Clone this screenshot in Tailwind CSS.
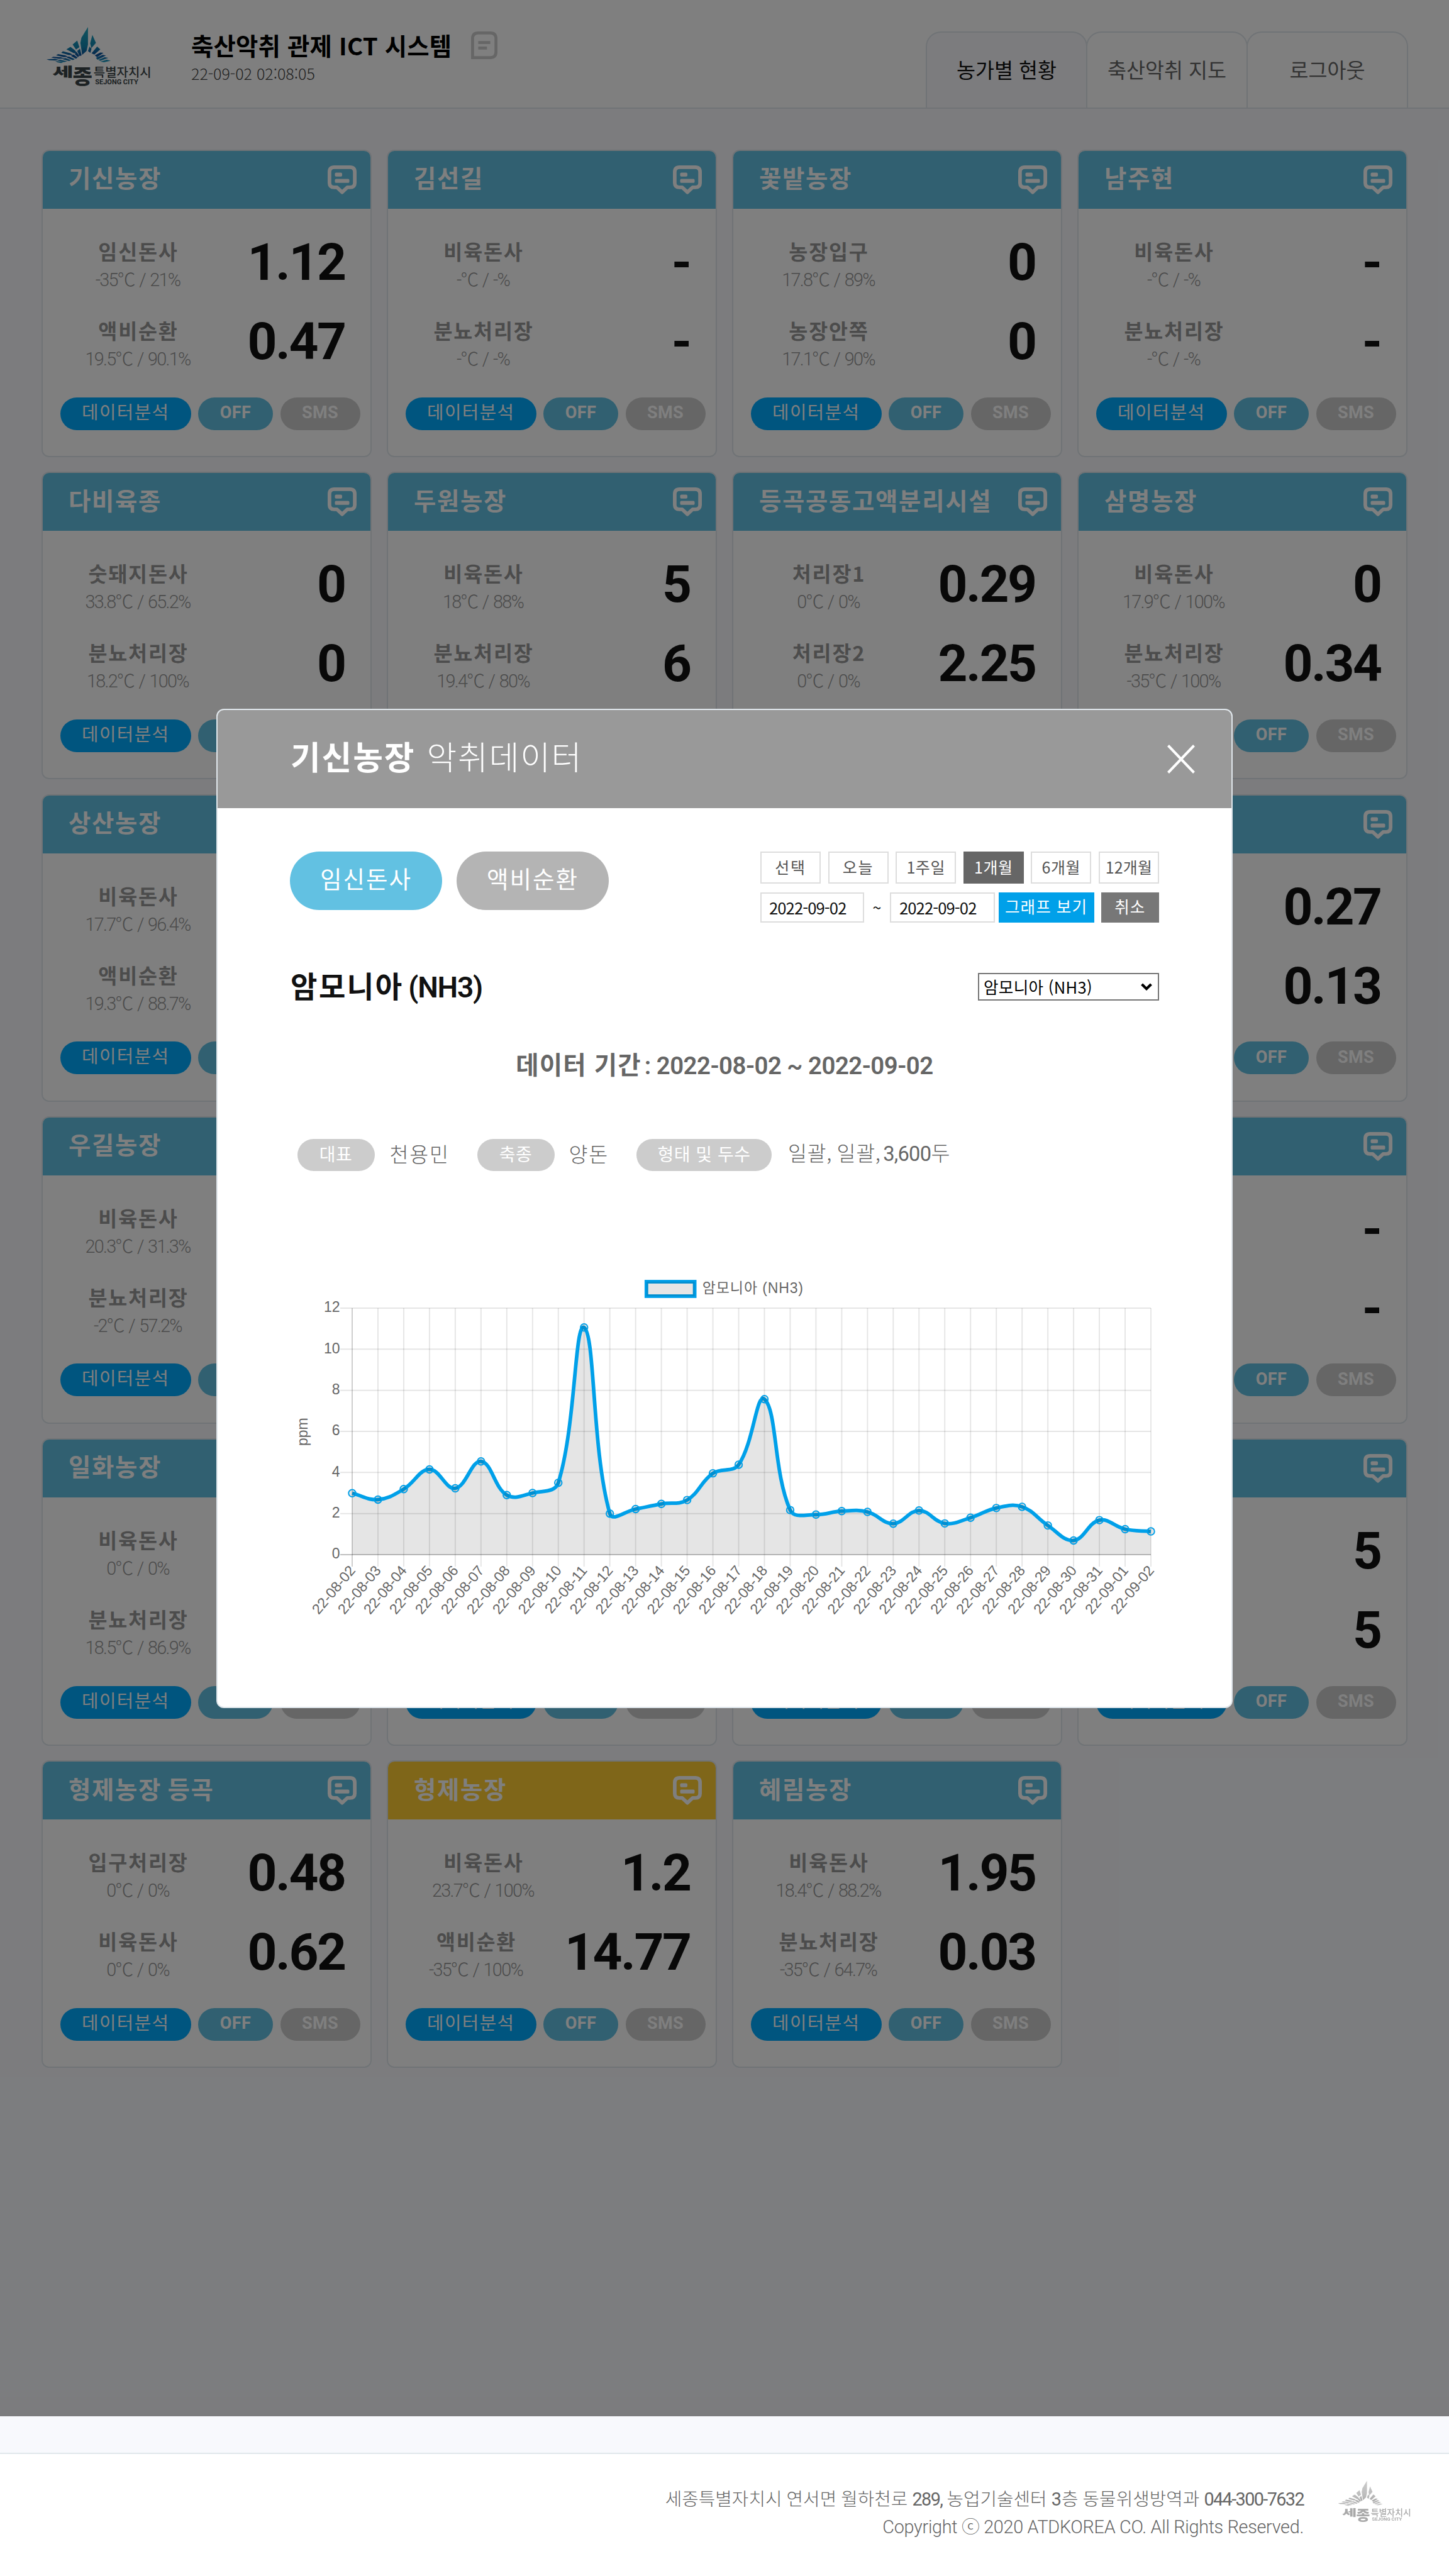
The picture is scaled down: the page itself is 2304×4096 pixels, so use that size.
<!DOCTYPE html>
<html lang="ko">
<head>
<meta charset="utf-8">
<title>축산악취 관제 ICT 시스템</title>
<script src="https://cdn.jsdelivr.net/npm/@tailwindcss/browser@4"></script>
</head>
<body class="bg-[#f8f9fd] font-['Noto_Sans_CJK_KR',sans-serif] text-black">

<svg class="absolute h-0 w-0">
  <defs>
    <linearGradient id="wing" gradientUnits="userSpaceOnUse" x1="220" y1="60" x2="230" y2="222">
      <stop offset="0" stop-color="#1fa3bd"/><stop offset="0.5" stop-color="#1386b0"/><stop offset="0.78" stop-color="#0b4f9c"/><stop offset="1" stop-color="#1a9ac0"/>
    </linearGradient>
    <symbol id="emblem" viewBox="45 40 530 298">
      <g fill="url(#wing)">
        <path d="M256 42L223 96L218 122L227 182L249 162L256 130Z"/>
        <path d="M278 82L296 122L273 148L267 124Z"/>
        <path d="M264 140L274 151L268 172L256 163Z"/>
        <path d="M202 110L213 143L196 155L179 130Z"/>
        <path d="M216 150L224 184L214 188L202 162Z"/>
        <path d="M168 142L190 158L200 172L186 174L148 154Z"/>
        <path d="M198 166L212 186L206 194L190 178Z"/>
        <path d="M130 164L166 173L182 183L160 183L122 172Z"/>
        <path d="M184 180L204 195L196 202L170 187Z"/>
        <path d="M106 178L142 184L158 191L134 193L96 184Z"/>
        <path d="M160 190L190 203L180 208L148 195Z"/>
        <path d="M82 191L120 194L138 200L110 202L72 195Z"/>
        <path d="M142 198L172 209L160 213L128 203Z"/>
        <path d="M48 204L90 202L112 207L92 210L62 209Z"/>
        <path d="M116 206L152 214L136 218L104 211Z"/>
        <path d="M92 213L134 218L122 223L102 219Z"/>
        <path d="M302 140L318 154L288 180L274 174Z"/>
        <path d="M318 170L334 172L302 194L290 184Z"/>
        <path d="M346 185L304 206L296 197L330 182Z"/>
        <path d="M358 197L318 212L308 207L340 194Z"/>
        <path d="M370 211L336 219L318 216L350 206Z"/>
      </g>
      <g fill="#3a4548" font-family="'Noto Sans CJK KR',sans-serif">
        <text x="77" y="291" font-size="64" font-weight="900" textLength="106" lengthAdjust="spacingAndGlyphs">세</text>
        <text x="179" y="325" font-size="100" font-weight="900" textLength="99" lengthAdjust="spacingAndGlyphs">종</text>
        <text x="284" y="291" font-size="62" font-weight="500" textLength="290" lengthAdjust="spacingAndGlyphs">특별자치시</text>
        <text x="292" y="330" font-size="32" font-weight="700" font-family="Roboto,sans-serif" textLength="216" lengthAdjust="spacingAndGlyphs">SEJONG CITY</text>
      </g>
    </symbol>
    <symbol id="bubble" viewBox="0 0 48 48">
      <path d="M11 3H37Q45 3 45 11V29Q45 36.5 37 36.5H32.5L24 44.5L15.5 36.5H11Q3 36.5 3 29V11Q3 3 11 3Z" fill="none" stroke="currentColor" stroke-width="6" stroke-linejoin="round"/>
      <rect x="12" y="12" width="12" height="6.5" rx="2" fill="currentColor"/>
      <rect x="12" y="22.5" width="24" height="6.5" rx="2" fill="currentColor"/>
    </symbol>
  </defs>
</svg>

<div class="relative flex h-[4096px] w-[2304px] flex-col overflow-hidden">

  <header class="flex h-[173px] justify-between border-b-2 border-[#e0e7ec] bg-white pl-[73px] pr-[65px]">
    <div class="flex">
      <svg class="mt-[42px] h-[95px] w-[168px]"><use href="#emblem"/></svg>
      <div class="ml-[63px] mt-[49px] w-[412px]">
        <h1 class="whitespace-nowrap text-[38.4px] font-bold leading-[44px] tracking-[0.2px]">축산악취 관제 ICT 시스템</h1>
        <p class="mt-[9.5px] whitespace-nowrap text-[25px] font-light leading-[26px] text-[#444]">22-09-02 02:08:05</p>
      </div>
      <svg class="ml-[33px] mt-[50px] h-[44px] w-[42px] text-[#ccc]" viewBox="0 0 44 46" fill="none" stroke="currentColor">
        <path d="M2.5 43.5V12Q2.5 2.5 12 2.5H32Q41.500 2.500 41.500 12V34Q41.500 43.500 32 43.500Z" stroke-width="5"/>
        <path d="M12 18.500H32M12 27.500H26.500" stroke-width="5"/>
      </svg>
    </div>
    <nav class="flex items-end text-[32.64px] leading-none text-[#666]">
      <a class="flex h-[121px] w-[257px] items-center justify-center rounded-t-[24px] border-2 border-b-0 border-[#e0e7ec] bg-[#f8f9fd] pb-[2px] text-[#111]">농가별 현황</a>
      <a class="-ml-[2px] flex h-[121px] w-[257px] items-center justify-center rounded-t-[24px] border-2 border-b-0 border-[#e0e7ec] pb-[2px]">축산악취 지도</a>
      <a class="-ml-[2px] flex h-[121px] w-[257px] items-center justify-center rounded-t-[24px] border-2 border-b-0 border-[#e0e7ec] pb-[2px]">로그아웃</a>
    </nav>
  </header>

  <main class="h-[3727px] px-[66px] pt-[65px]">
    <div id="farms" class="grid auto-rows-[489px] grid-cols-4 gap-x-[24px] gap-y-[23.3px]"></div>
  </main>

  <footer class="flex h-[196px] justify-end border-t-2 border-[#e0e7ec] bg-white pr-[60px]">
    <div class="whitespace-nowrap pt-[50px] text-right font-['Roboto','Noto_Sans_CJK_KR',sans-serif] text-[28.8px] font-light leading-[44px] tracking-[-0.3px] text-[#666]">
      <p class="tracking-[0.05px]">세종특별자치시 연서면 월하천로 <span class="font-normal tracking-[-1.6px]">289,</span> 농업기술센터 <span class="font-normal">3</span>층 동물위생방역과 <span class="font-normal tracking-[-1.6px]">044-300-7632</span></p>
      <p>Copyright ⓒ 2020 ATDKOREA CO. All Rights Reserved.</p>
    </div>
    <svg class="ml-[54px] mt-[42px] h-[66px] w-[117px] opacity-45 grayscale"><use href="#emblem"/></svg>
  </footer>

  <div class="absolute inset-x-0 top-0 h-[3842px] bg-black/50 pl-[344px] pt-[1127px]">
    <section class="flex h-[1589px] w-[1616px] flex-col overflow-hidden rounded-[12px] border-2 border-[#e0e7ec] bg-white">
      <div class="flex h-[156px] items-center justify-between bg-[#999] pl-[116px] pr-[58px] text-white">
        <h2 class="flex gap-[18px] pb-[10px] text-[51.84px] leading-none tracking-[1.92px]"><b class="font-bold">기신농장</b><span class="font-light">악취데이터</span></h2>
        <svg class="h-[46px] w-[44px]" viewBox="0 0 44 46" stroke="currentColor" stroke-width="4"><path d="M1.500 1.500L42.500 44.500M42.500 1.500L1.500 44.500"/></svg>
      </div>

      <div class="px-[115px] pt-[69px]">
        <div class="flex justify-between">
          <div class="flex gap-[23px] text-[37.5px] leading-none tracking-[2px] text-white">
            <button class="flex h-[93px] w-[242px] items-center justify-center rounded-full bg-[#62c1e2] pb-[9px]">임신돈사</button>
            <button class="flex h-[93px] w-[242px] items-center justify-center rounded-full bg-[#b4b4b4] pb-[9px]">액비순환</button>
          </div>
          <div class="w-[634px] text-[24.96px] leading-none">
            <div class="flex justify-between tracking-[1.9px] text-[#555]">
              <button class="flex h-[51px] w-[96px] items-center justify-center whitespace-nowrap border-2 border-[#ddd] pb-[2px]">선택</button>
              <button class="flex h-[51px] w-[96px] items-center justify-center whitespace-nowrap border-2 border-[#ddd] pb-[2px]">오늘</button>
              <button class="flex h-[51px] w-[96px] items-center justify-center whitespace-nowrap border-2 border-[#ddd] pb-[2px] tracking-[0.6px]">1주일</button>
              <button class="flex h-[51px] w-[96px] items-center justify-center whitespace-nowrap border-2 border-[#666] bg-[#666] pb-[2px] tracking-[0.6px] text-white">1개월</button>
              <button class="flex h-[51px] w-[96px] items-center justify-center whitespace-nowrap border-2 border-[#ddd] pb-[2px] tracking-[0.6px]">6개월</button>
              <button class="flex h-[51px] w-[96px] items-center justify-center whitespace-nowrap border-2 border-[#ddd] pb-[2px] tracking-[0.2px]">12개월</button>
            </div>
            <div class="mt-[14px] flex h-[47.500px]">
              <div class="flex w-[165px] items-center border-2 border-[#ddd] pl-[12px] text-[25.6px] tracking-[-0.9px] text-[#111]">2022-09-02</div>
              <div class="flex w-[41px] items-center justify-center text-[#111]">~</div>
              <div class="flex w-[167px] items-center border-2 border-[#ddd] pl-[13px] text-[25.6px] tracking-[-0.9px] text-[#111]">2022-09-02</div>
              <button class="ml-[5.500px] flex w-[152px] items-center justify-center whitespace-nowrap bg-[#00a0e9] pb-[4px] text-[25.6px] tracking-[1px] text-white">그래프 보기</button>
              <button class="ml-[11px] flex w-[92.500px] items-center justify-center bg-[#777] pb-[4px] text-[25.6px] tracking-[1px] text-white">취소</button>
            </div>
          </div>
        </div>

        <div class="mt-[80px] flex h-[44px] items-center justify-between">
          <h3 class="whitespace-nowrap pl-[1px] text-[46.08px] font-bold leading-none tracking-[2.500px] text-[#111]"><span class="mr-[-2.500px]">암모니아</span><span class="font-['Roboto'] font-semibold tracking-[-1.200px]"> (NH3)</span></h3>
          <div class="flex h-[44px] w-[288px] items-center justify-between border-2 border-[#767676] pl-[7px] pr-[9px] text-[25.6px] leading-none tracking-[0.3px]">
            <span class="whitespace-nowrap">암모니아 (NH3)</span>
            <svg class="h-[12px] w-[18px]" viewBox="0 0 18 12" fill="none" stroke="currentColor" stroke-width="4.200"><path d="M1.600 2L9 9.200L16.400 2"/></svg>
          </div>
        </div>

        <p class="mt-[80px] h-[40px] whitespace-nowrap text-center text-[39.500px] font-bold leading-[40px] tracking-[1.100px] text-[#666]"><span class="mr-[-4px]">데이터 기간</span><span class="font-['Roboto'] text-[38.4px] font-semibold tracking-[-0.5px]"> : 2022-08-02 ~ 2022-09-02</span></p>

        <div class="mt-[100px] flex h-[51px] items-center pl-[11.500px] text-[32.64px] font-light leading-none tracking-[1.700px] text-[#666]">
          <span class="flex h-[51px] w-[123px] items-center justify-center rounded-full bg-[#ccc] pb-[5px] text-[28px] font-normal tracking-[0.400px] text-white">대표</span>
          <span class="ml-[24px] w-[139px] whitespace-nowrap pb-[4px]">천용민</span>
          <span class="flex h-[51px] w-[123px] items-center justify-center rounded-full bg-[#ccc] pb-[5px] text-[28px] font-normal tracking-[0.400px] text-white">축종</span>
          <span class="ml-[23px] w-[107.500px] whitespace-nowrap pb-[4px]">양돈</span>
          <span class="flex h-[51px] w-[215px] items-center justify-center whitespace-nowrap rounded-full bg-[#ccc] pb-[5px] text-[28px] font-normal tracking-[0.500px] text-white">형태 및 두수</span>
          <span class="ml-[26px] whitespace-nowrap pb-[4px] tracking-[0.600px]">일괄<span class="tracking-[-0.500px]">, </span>일괄<span class="tracking-[-2.500px]">, </span><span class="font-['Roboto'] font-normal tracking-[-0.700px]">3,600</span>두</span>
        </div>
      </div>

      <svg id="chart" class="h-[850px] w-[1612px] shrink-0" viewBox="346 1862 1612 850" font-family="'Liberation Sans','Noto Sans CJK KR',sans-serif" font-size="23.04" fill="#666"></svg>
    </section>
  </div>
</div>

<script>
const farms = [
  ['기신농장', [['임신돈사','-35℃ / 21%','1.12'],['액비순환','19.5℃ / 90.1%','0.47']]],
  ['김선길', [['비육돈사','-℃ / -%','-'],['분뇨처리장','-℃ / -%','-']]],
  ['꽃밭농장', [['농장입구','17.8℃ / 89%','0'],['농장안쪽','17.1℃ / 90%','0']]],
  ['남주현', [['비육돈사','-℃ / -%','-'],['분뇨처리장','-℃ / -%','-']]],
  ['다비육종', [['숫돼지돈사','33.8℃ / 65.2%','0'],['분뇨처리장','18.2℃ / 100%','0']]],
  ['두원농장', [['비육돈사','18℃ / 88%','5'],['분뇨처리장','19.4℃ / 80%','6']]],
  ['등곡공동고액분리시설', [['처리장1','0℃ / 0%','0.29'],['처리장2','0℃ / 0%','2.25']]],
  ['삼명농장', [['비육돈사','17.9℃ / 100%','0'],['분뇨처리장','-35℃ / 100%','0.34']]],
  ['상산농장', [['비육돈사','17.7℃ / 96.4%',''],['액비순환','19.3℃ / 88.7%','']]],
  null, null,
  ['', [['','','0.27'],['','','0.13']]],
  ['우길농장', [['비육돈사','20.3℃ / 31.3%',''],['분뇨처리장','-2℃ / 57.2%','']]],
  null, null,
  ['', [['','','-'],['','','-']]],
  ['일화농장', [['비육돈사','0℃ / 0%',''],['분뇨처리장','18.5℃ / 86.9%','']]],
  ['', []], ['', []],
  ['', [['','','5'],['','','5']]],
  ['형제농장 등곡', [['입구처리장','0℃ / 0%','0.48'],['비육돈사','0℃ / 0%','0.62']]],
  ['형제농장', [['비육돈사','23.7℃ / 100%','1.2'],['액비순환','-35℃ / 100%','14.77']], 'bg-[#ffcc33]'],
  ['혜림농장', [['비육돈사','18.4℃ / 88.2%','1.95'],['분뇨처리장','-35℃ / 64.7%','0.03']]],
];
const row = ([label, env, value]) => `
  <div class="flex h-[80px] justify-between">
    <div class="w-[304px] whitespace-nowrap text-center text-[#999]">
      <div class="h-[40px] text-[32.64px] font-bold leading-[40px] tracking-[1.8px]">${label}</div>
      <div class="mt-[11px] pr-[2px] font-['Roboto','Noto_Sans_CJK_KR',sans-serif] text-[28.8px] font-light leading-[30px] tracking-[-1.7px] [word-spacing:2px]">${env}</div>
    </div>
    <div class="font-['Roboto'] text-[82px] font-bold leading-[77px] tracking-[-2.5px] text-[#111]">${value}</div>
  </div>`;
const card = ([name, rows, tone = 'bg-[#62c1e2]']) => `
  <article class="flex flex-col overflow-hidden rounded-[12px] border-2 border-[#e0e7ec] bg-white">
    <div class="flex h-[92px] shrink-0 items-center justify-between pl-[41px] pr-[22px] text-white ${tone}">
      <h2 class="whitespace-nowrap pb-[9px] text-[38.4px] font-bold leading-none tracking-[1.7px] [word-spacing:-3px]">${name}</h2>
      <svg class="h-[46px] w-[46px] shrink-0"><use href="#bubble"/></svg>
    </div>
    <div class="mt-[47px] flex h-[206px] flex-col gap-[46px] pr-[40.5px]">${rows.map(row).join('')}</div>
    <div class="mt-[46.5px] flex gap-[11.5px] pl-[28px] font-['Roboto'] text-[27px] font-bold leading-none tracking-[0.4px] text-white">
      <button class="flex h-[52px] w-[207.5px] items-center justify-center rounded-full bg-[#00aaff] pb-[7px] font-['Noto_Sans_CJK_KR'] text-[28.8px] font-normal tracking-[1.4px]">데이터분석</button>
      <button class="flex h-[52px] w-[119px] items-center justify-center rounded-full bg-[#62c1e2] pb-[2px]">OFF</button>
      <button class="flex h-[52px] w-[127px] items-center justify-center rounded-full bg-[#ccc] pb-[2px]">SMS</button>
    </div>
  </article>`;
document.getElementById('farms').innerHTML = farms.map(f => f ? card(f) : '<article class="rounded-[12px] bg-white"></article>').join('');

const values = [2.99,2.68,3.19,4.15,3.23,4.54,2.90,3.0,3.50,11.06,2.0,2.22,2.47,2.66,3.96,4.38,7.57,2.17,1.95,2.12,2.08,1.51,2.15,1.52,1.80,2.27,2.33,1.42,0.69,1.68,1.24,1.13];
const X0 = 560, X1 = 1830, Y0 = 2472, Y1 = 2080;
const px = i => X0 + (X1 - X0) * i / 31;
const py = v => Y0 - (Y0 - Y1) * v / 12;
const pts = values.map((v, i) => [px(i), py(v)]);
const clampY = y => Math.min(Y0, Math.max(Y1, y));
// Bezier control points on either side of each sample, tension 0.4
const ctl = pts.map((p, i) => {
  const a = pts[i - 1] || p, b = pts[i + 1] || p;
  const d01 = Math.hypot(p[0] - a[0], p[1] - a[1]), d12 = Math.hypot(b[0] - p[0], b[1] - p[1]);
  const fa = 0.4 * d01 / (d01 + d12), fb = 0.4 * d12 / (d01 + d12);
  return [[p[0] - fa * (b[0] - a[0]), clampY(p[1] - fa * (b[1] - a[1]))],
          [p[0] + fb * (b[0] - a[0]), clampY(p[1] + fb * (b[1] - a[1]))]];
});
let d = `M${pts[0]}`;
for (let i = 1; i < pts.length; i++) d += `C${ctl[i - 1][1]} ${ctl[i][0]} ${pts[i]}`;
let s = '';
for (let v = 0; v <= 12; v += 2) {
  s += `<path d="M${X0 - 19} ${py(v)}H${X1}" stroke="#000" stroke-opacity="${v ? 0.1 : 0.25}" stroke-width="1.92"/>`;
  s += `<text x="540.5" y="${py(v) + 6.3}" text-anchor="end">${v}</text>`;
}
pts.forEach(([x], i) => {
  s += `<path d="M${x} ${Y1}V${Y0 + 19}" stroke="#000" stroke-opacity="${i ? 0.1 : 0.2}" stroke-width="1.92"/>`;
  const day = new Date(Date.UTC(2022, 7, 2 + i)).toISOString().slice(2, 10);
  s += `<text transform="translate(${x} 2492.5) rotate(-50)" y="8" text-anchor="end">${day}</text>`;
});
s += `<path d="${d}L${X1} ${Y0}L${X0} ${Y0}Z" fill="#000" fill-opacity="0.1"/>`;
s += `<path d="${d}" fill="none" stroke="#00a0e9" stroke-width="5.76" stroke-linejoin="round"/>`;
s += pts.map(([x, y]) => `<circle cx="${x}" cy="${y}" r="5.76" fill="#000" fill-opacity="0.1" stroke="#00a0e9" stroke-width="1.92"/>`).join('');
s += `<text transform="translate(489 2276.6) rotate(-90)" text-anchor="middle">ppm</text>`;
s += `<rect x="1027.8" y="2038" width="76.8" height="23" fill="none" stroke="#00a0e9" stroke-width="5.76"/><rect x="1027.8" y="2038" width="76.8" height="23" fill="#000" fill-opacity="0.1"/>`;
s += `<text x="1116.8" y="2055.5" letter-spacing="0.85">암모니아 (NH3)</text>`;
document.getElementById('chart').innerHTML = s;
</script>
</body>
</html>
